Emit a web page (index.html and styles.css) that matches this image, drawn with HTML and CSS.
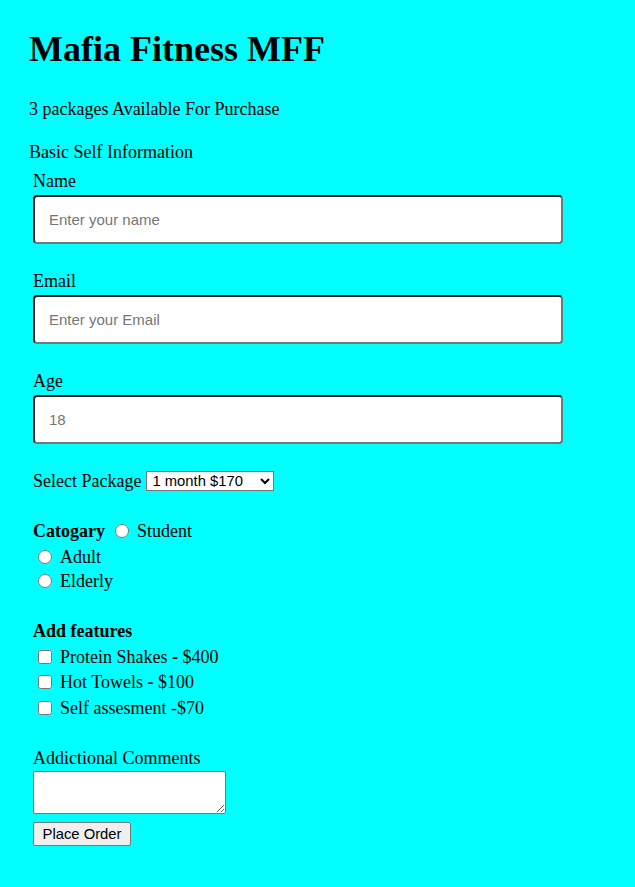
FILE: index.html
```html
<!DOCTYPE html>
<html>
<head>
<meta charset="utf-8">
<title>Mafia Fitness MFF</title>
<link rel="stylesheet" href="styles.css">
</head>
<body>
<div class="page">
  <h1 class="title">Mafia Fitness MFF</h1>
  <p class="intro">3 packages Available For Purchase</p>
  <div class="section">Basic Self Information</div>
  <form class="order">
    <label class="label" for="name">Name</label>
    <input class="field" id="name" type="text" placeholder="Enter your name">

    <label class="label gap" for="email">Email</label>
    <input class="field" id="email" type="text" placeholder="Enter your Email">

    <label class="label gap" for="age">Age</label>
    <input class="field" id="age" type="text" placeholder="18">

    <div class="row pkg">
      <span>Select Package</span>
      <select class="select">
        <option>1 month $170</option>
        <option>6 months $900</option>
        <option>12 months $1700</option>
      </select>
    </div>

    <div class="row cat"><b>Catogary</b><input class="radio first" type="radio" name="cat"><span class="opt">Student</span></div>
    <div class="row item"><input class="radio" type="radio" name="cat"><span class="opt">Adult</span></div>
    <div class="row item last"><input class="radio" type="radio" name="cat"><span class="opt">Elderly</span></div>

    <div class="row feat"><b>Add features</b></div>
    <div class="row item2"><input class="check" type="checkbox"><span class="opt">Protein Shakes <b>-</b> $400</span></div>
    <div class="row item2"><input class="check" type="checkbox"><span class="opt">Hot Towels <b>-</b> $100</span></div>
    <div class="row item2"><input class="check" type="checkbox"><span class="opt">Self assesment -$70</span></div>

    <div class="row comments">Addictional Comments</div>
    <textarea class="area"></textarea>
    <div><button class="btn" type="button">Place Order</button></div>
  </form>
</div>
</body>
</html>
```
FILE: styles.css
```css
html, body {
  margin: 0;
  padding: 0;
  background: #00ffff;
}
body {
  font-family: "Liberation Serif", "Times New Roman", serif;
  font-size: 18px;
  line-height: 20px;
  color: #000;
}
.page {
  padding: 29px 0 0 29px;
}
.title {
  margin: 0;
  font-size: 36px;
  line-height: 40px;
  font-weight: bold;
}
.intro {
  margin: 30px 0 0;
}
.section {
  margin-top: 23px;
}
.order {
  margin-left: 4px;
  display: flex;
  flex-direction: column;
  align-items: flex-start;
}
.label {
  margin-top: 9px;
  height: 20px;
}
.label.gap {
  margin-top: 27px;
}
.field {
  box-sizing: border-box;
  margin-top: 4px;
  width: 530px;
  height: 49px;
  padding: 0 14px;
  border-width: 2px;
  border-style: solid;
  border-color: #1a1a1a #767676 #767676 #1a1a1a;
  border-radius: 4px;
  background: #fff;
  font-family: "Liberation Sans", Arial, sans-serif;
  font-size: 15px;
  color: #000;
  outline: none;
}
.field::placeholder {
  color: #767676;
}
.row {
  display: flex;
  align-items: center;
  white-space: pre;
}
.pkg {
  margin-top: 27px;
  height: 20px;
}
.select {
  margin-left: 5px;
  box-sizing: border-box;
  width: 128px;
  height: 20px;
  font-family: "Liberation Sans", Arial, sans-serif;
  font-size: 14.8px;
  border: 1px solid #767676;
  border-radius: 0;
  background: #fff;
  color: #000;
  padding: 0 0 0 1px;
}
.cat {
  margin-top: 30px;
  height: 20px;
}
.item {
  margin-top: 6px;
  height: 20px;
}
.item.last {
  margin-top: 4px;
}
.radio, .check {
  width: 14px;
  height: 14px;
  margin: 0 4px 0 5px;
}
.radio.first {
  margin-left: 10px;
}
.opt {
  margin-left: 4px;
}
.feat {
  margin-top: 30px;
  height: 20px;
}
.item2 {
  margin-top: 5.5px;
  height: 20px;
}
.comments {
  margin-top: 30px;
  height: 20px;
}
.area {
  box-sizing: border-box;
  margin-top: 3px;
  width: 193px;
  height: 43px;
  border: 1px solid #767676;
  border-radius: 2px;
  background: #fff;
}
.btn {
  margin-top: 8px;
  box-sizing: border-box;
  width: 98px;
  height: 24px;
  padding: 0;
  font-family: "Liberation Sans", Arial, sans-serif;
  font-size: 14.8px;
  background: #efefef;
  border: 1px solid #767676;
  border-radius: 2px;
  color: #000;
}
```
